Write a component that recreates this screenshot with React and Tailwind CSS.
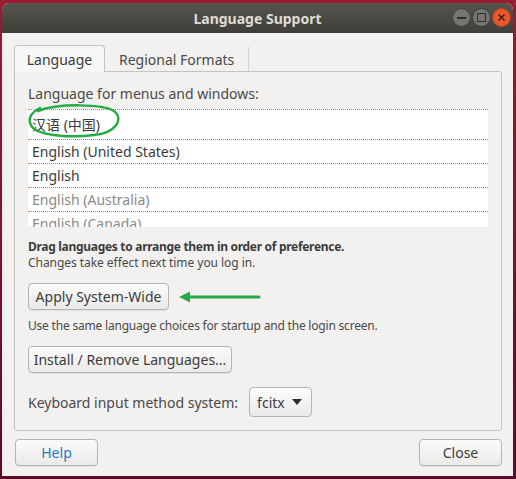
import { useState } from "react";

/* ================= SMALL PIECES ================= */
function GtkButton({ children, className = "", textClass = "text-[#3c3c3c]" }) {
  return (
    <button
      className={`h-[27px] rounded-[4px] border border-[#b6b4b0] bg-gradient-to-b from-[#fbfbfa] to-[#ebeae8] shadow-[0_1px_0_rgba(0,0,0,0.06)] text-[14px] ${textClass} ${className}`}
    >
      {children}
    </button>
  );
}

function TitleButton({ kind }) {
  if (kind === "close") {
    return (
      <div className="w-[19px] h-[19px] rounded-full bg-[#e8582a] border border-[#b8441c] flex items-center justify-center">
        <svg width="9" height="9" viewBox="0 0 9 9">
          <path d="M1.5 1.5 L7.5 7.5 M7.5 1.5 L1.5 7.5" stroke="#3a1a10" strokeWidth="1.4" />
        </svg>
      </div>
    );
  }
  return (
    <div className="w-[19px] h-[19px] rounded-full bg-[#75746f] border border-[#3f3e3a] flex items-center justify-center">
      {kind === "min" ? (
        <div className="w-[9px] h-[2px] bg-[#2e2d2a]" />
      ) : (
        <div className="w-[9px] h-[9px] border-[1.5px] border-[#2e2d2a]" />
      )}
    </div>
  );
}

/* ================= COMPONENT ================= */
export default function App() {
  const [tab, setTab] = useState("language");
  const languages = [
    { name: "汉语 (中国)", tone: "text-[#3c3c3c]", h: "h-[30px]" },
    { name: "English (United States)", tone: "text-[#3c3c3c]", h: "h-[24px]" },
    { name: "English", tone: "text-[#3c3c3c]", h: "h-[24px]" },
    { name: "English (Australia)", tone: "text-[#8a8a88]", h: "h-[24px]" },
    { name: "English (Canada)", tone: "text-[#8a8a88]", h: "h-[24px]" }
  ];

  return (
    <div
      className="w-[516px] h-[479px] bg-gradient-to-b from-[#9a1c31] to-[#5a0b2b] pl-[2px] pr-[3px] pt-[3px] pb-[3px]"
      style={{ fontFamily: '"Noto Sans", "Noto Sans CJK SC", sans-serif' }}
    >
      <div className="h-full flex flex-col rounded-t-[7px] overflow-hidden bg-[#f2f1f0]">
        {/* TITLE BAR */}
        <div className="relative h-[30px] shrink-0 bg-gradient-to-b from-[#57554f] to-[#3f3e3a] flex items-center justify-center">
          <span className="text-[14px] font-bold text-[#dfdbd2]">Language Support</span>
          <div className="absolute right-[2px] top-[5px] flex gap-[1px]">
            <TitleButton kind="min" />
            <TitleButton kind="max" />
            <TitleButton kind="close" />
          </div>
        </div>

        {/* BODY */}
        <div className="flex-1 flex flex-col pt-[12px] pl-[12px] pr-[11px]">
          {/* TABS */}
          <div className="flex h-[26px] items-end text-[14px]">
            <button
              onClick={() => setTab("language")}
              className="relative z-10 w-[91px] h-[27px] -mb-px rounded-t-[4px] border border-b-0 border-[#c6c4c0] bg-[#f7f7f6] text-[#3c3c3c]"
            >
              Language
            </button>
            <button
              onClick={() => setTab("regional")}
              className="h-[24px] px-[14px] border-r border-[#d4d2ce] text-[#4a4a48]"
            >
              Regional Formats
            </button>
          </div>

          {/* FRAME */}
          <div className="h-[360px] border border-[#c6c4c0] rounded-b-[3px] rounded-tr-[3px] px-[13px] flex flex-col text-[#3c3c3c]">
            <div className="h-[37px] flex items-end pb-[5px] text-[14px] text-[#4a4a48]">
              Language for menus and windows:
            </div>

            {/* LIST */}
            <div className="relative">
              <div className="h-[118px] bg-white overflow-hidden text-[14px]">
                {languages.map((l) => (
                  <div
                    key={l.name}
                    className={`${l.h} shrink-0 border-t border-dotted border-[#e8763c] flex items-center pl-[4px] ${l.tone}`}
                  >
                    {l.name}
                  </div>
                ))}
              </div>
              {/* green marker ring */}
              <svg className="absolute left-0 top-[-6px]" width="96" height="36" viewBox="0 0 96 36">
                <path
                  d="M10 8 C 30 0, 75 1, 86 8 C 96 16, 88 30, 66 32 C 44 35, 12 33, 4 24 C -1 17, 2 10, 12 5"
                  fill="none"
                  stroke="#25ab45"
                  strokeWidth="2.5"
                  strokeLinecap="round"
                />
              </svg>
            </div>

            <div className="mt-[12px] text-[12px] leading-[16px] font-bold tracking-[-0.3px] text-[#3c3c3c]">
              Drag languages to arrange them in order of preference.
            </div>
            <div className="text-[12px] leading-[16px] tracking-[-0.05px] text-[#4a4a48]">
              Changes take effect next time you log in.
            </div>

            <div className="mt-[12px] flex items-center">
              <GtkButton className="w-[141px]">Apply System-Wide</GtkButton>
              <svg className="ml-[10px]" width="82" height="12" viewBox="0 0 82 12">
                <path d="M8 6 L80 6" stroke="#25ab45" strokeWidth="3" strokeLinecap="round" />
                <path d="M0 6 L11 0.5 L11 11.5 Z" fill="#25ab45" />
              </svg>
            </div>
            <div className="mt-[8px] text-[12px] leading-[16px] tracking-[-0.2px] text-[#4a4a48]">
              Use the same language choices for startup and the login screen.
            </div>

            <GtkButton className="mt-[12px] w-[204px]">Install / Remove Languages...</GtkButton>

            <div className="mt-[14px] flex items-center text-[14px] text-[#4a4a48]">
              <span>Keyboard input method system:</span>
              <button className="ml-[11px] h-[30px] w-[63px] rounded-[4px] border border-[#b6b4b0] bg-gradient-to-b from-[#fbfbfa] to-[#ebeae8] flex items-center pl-[7px] gap-[7px] text-[#3c3c3c]">
                fcitx
                <svg width="10" height="6" viewBox="0 0 10 6">
                  <path d="M0 0 L10 0 L5 6 Z" fill="#2e2e2e" />
                </svg>
              </button>
            </div>
          </div>

          {/* FOOTER */}
          <div className="mt-[8px] flex justify-between">
            <GtkButton className="w-[83px] ml-[1px]" textClass="text-[#1c7dbf]">Help</GtkButton>
            <GtkButton className="w-[83px]">Close</GtkButton>
          </div>
        </div>
      </div>
    </div>
  );
}
